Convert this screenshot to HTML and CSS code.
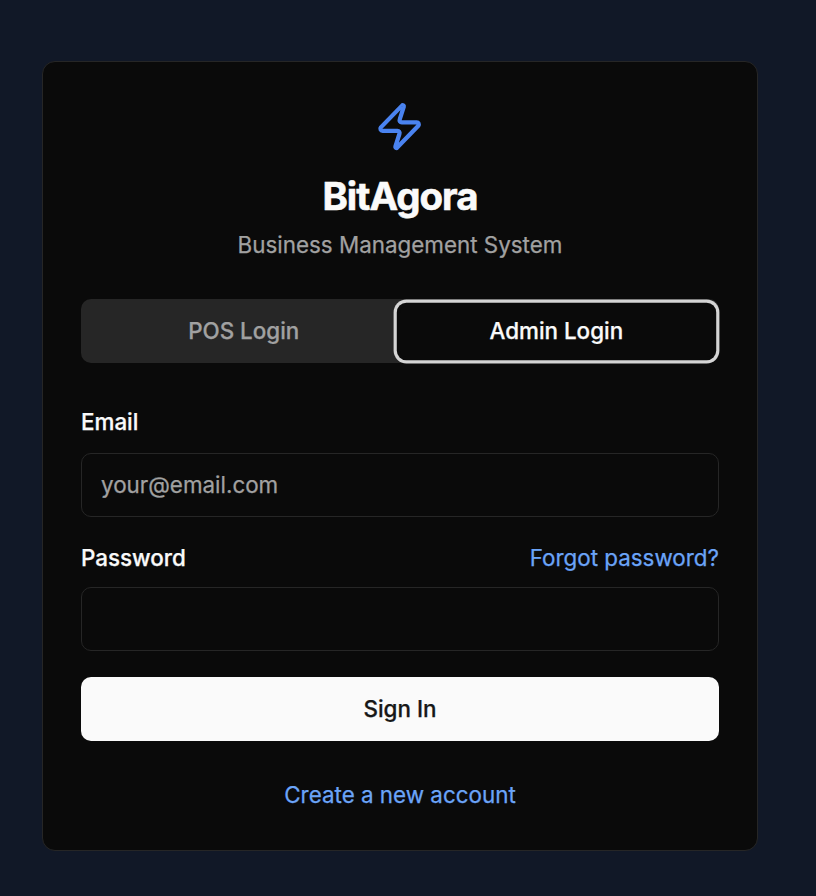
FILE: index.html
```html
<!DOCTYPE html>
<html lang="en">
<head>
<meta charset="utf-8">
<title>BitAgora</title>
<link rel="stylesheet" href="styles.css">
</head>
<body>
<main class="card">
  <header class="brand">
    <svg class="logo" viewBox="0 0 24 24" fill="none" stroke="currentColor" stroke-width="2" stroke-linecap="round" stroke-linejoin="round"><path d="M4 14a1 1 0 0 1-.78-1.63l9.9-10.2a.5.5 0 0 1 .86.46l-1.92 6.02A1 1 0 0 0 13 10h7a1 1 0 0 1 .78 1.63l-9.9 10.2a.5.5 0 0 1-.86-.46l1.92-6.02A1 1 0 0 0 11 14z"/></svg>
    <h1 class="title">BitAgora</h1>
    <p class="subtitle">Business Management System</p>
  </header>
  <div class="tabs">
    <button class="tab" type="button">POS Login</button>
    <button class="tab tab-active" type="button">Admin Login</button>
  </div>
  <form class="form">
    <label class="label" for="email">Email</label>
    <input class="input" id="email" type="email" placeholder="your@email.com">
    <div class="row">
      <label class="label" for="password">Password</label>
      <a class="link" href="#">Forgot password?</a>
    </div>
    <input class="input" id="password" type="password">
    <button class="submit" type="button">Sign In</button>
  </form>
  <a class="link create" href="#">Create a new account</a>
</main>
</body>
</html>
```
FILE: styles.css
```css
* { box-sizing: border-box; }
body {
  margin: 0;
  min-height: 896px;
  padding: 61px 58px 0 42px;
  background: #111827;
  color: #fafafa;
  font-family: Inter, sans-serif;
  font-size: 22.4px;
  line-height: 32px;
  -webkit-text-stroke: 0.25px currentColor;
}
.card {
  display: flex;
  flex-direction: column;
  height: 790px;
  padding: 39px 38px 0;
  border: 1px solid #262626;
  border-radius: 13px;
  background: #0a0a0a;
}
.brand { display: flex; flex-direction: column; align-items: center; }
.logo { width: 51.2px; height: 51.2px; color: #4a83f0; }
.title {
  margin: 19.8px 0 0;
  font-size: 38.4px;
  line-height: 48px;
  font-weight: 700;
  letter-spacing: -0.96px;
  -webkit-text-stroke-width: 0.6px;
}
.subtitle { margin: 9px 0 0; line-height: 32px; color: #a1a1a1; -webkit-text-stroke-color: #a1a1a1; }
.tabs {
  display: grid;
  grid-template-columns: 1fr 1fr;
  height: 64px;
  margin-top: 38px;
  padding: 7px 6.4px 6px;
  border-radius: 10px;
  background: #262626;
}
button { font: inherit; font-weight: 500; padding: 0; }
.tab { border: 0; background: none; color: #a1a1a1; }
.tab-active {
  border-radius: 6.4px;
  background: #0a0a0a;
  color: #fafafa;
  box-shadow: 0 0 0 3.2px #0a0a0a, 0 0 0 6.4px #d4d4d4;
}
.form { display: flex; flex-direction: column; margin-top: 43px; }
.label { font-weight: 500; }
.input {
  width: 100%;
  height: 64px;
  margin: 15px 0 0;
  padding: 0 19px;
  border: 1px solid #262626;
  border-radius: 10px;
  background: #0a0a0a;
  color: #fafafa;
  font: inherit;
}
.input::placeholder { color: #a1a1a1; }
.row { display: flex; justify-content: space-between; margin-top: 25px; }
.row + .input { margin-top: 13px; }
.link { color: #6ba4f8; text-decoration: none; }
.submit {
  height: 64px;
  margin-top: 26px;
  border: 0;
  border-radius: 10px;
  background: #fafafa;
  color: #171717;
}
.create { align-self: center; margin-top: 38px; }
```
